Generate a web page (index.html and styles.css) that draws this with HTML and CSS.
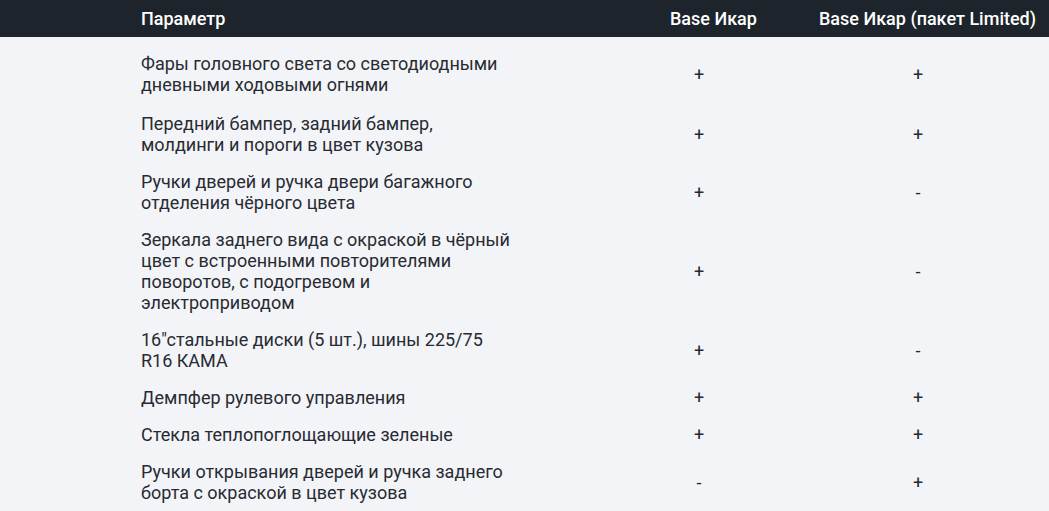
FILE: index.html
```html
<!DOCTYPE html>
<html lang="ru">
<head>
<meta charset="utf-8">
<title>Комплектация</title>
<link rel="stylesheet" href="styles.css">
</head>
<body>
<div class="table">
  <div class="row head">
    <div class="cell name">Параметр</div>
    <div class="cell val">Base Икар</div>
    <div class="cell val v3">Base Икар (пакет Limited)</div>
  </div>
  <div class="body">
    <div class="row first">
      <div class="cell name">Фары головного света со светодиодными<br>дневными ходовыми огнями</div>
      <div class="cell val">+</div>
      <div class="cell val v3">+</div>
    </div>
    <div class="row">
      <div class="cell name">Передний бампер, задний бампер,<br>молдинги и пороги в цвет кузова</div>
      <div class="cell val">+</div>
      <div class="cell val v3">+</div>
    </div>
    <div class="row">
      <div class="cell name">Ручки дверей и ручка двери багажного<br>отделения чёрного цвета</div>
      <div class="cell val">+</div>
      <div class="cell val v3">-</div>
    </div>
    <div class="row">
      <div class="cell name">Зеркала заднего вида с окраской в чёрный<br>цвет с встроенными повторителями<br>поворотов, с подогревом и<br>электроприводом</div>
      <div class="cell val">+</div>
      <div class="cell val v3">-</div>
    </div>
    <div class="row">
      <div class="cell name">16"стальные диски (5 шт.), шины 225/75<br>R16 КАМА</div>
      <div class="cell val">+</div>
      <div class="cell val v3">-</div>
    </div>
    <div class="row">
      <div class="cell name">Демпфер рулевого управления</div>
      <div class="cell val">+</div>
      <div class="cell val v3">+</div>
    </div>
    <div class="row">
      <div class="cell name">Стекла теплопоглощающие зеленые</div>
      <div class="cell val">+</div>
      <div class="cell val v3">+</div>
    </div>
    <div class="row">
      <div class="cell name">Ручки открывания дверей и ручка заднего<br>борта с окраской в цвет кузова</div>
      <div class="cell val">-</div>
      <div class="cell val v3">+</div>
    </div>
  </div>
</div>
</body>
</html>
```

FILE: styles.css
```css
* { box-sizing: border-box; }
html, body {
  margin: 0;
  padding: 0;
  background: #f3f4f8;
  overflow: hidden;
}
body {
  font-family: Roboto, "Noto Sans", "Liberation Sans", sans-serif;
  font-size: 18px;
  line-height: 21px;
  color: #272b31;
}
.table {
  width: 1049px;
}
.row {
  display: grid;
  grid-template-columns: 625px 148px 276px;
  align-items: center;
  padding: 8px 0;
}
.row .name {
  padding-left: 141px;
}
.head {
  background: #1e242c;
  color: #ffffff;
  font-weight: 500;
}
.head .val {
  padding-left: 45px;
  text-align: left;
  white-space: nowrap;
}
.head .v3 {
  padding-left: 46px;
}
.body {
  padding-top: 8px;
}
.row.first {
  padding-bottom: 10px;
}
.body .val {
  text-align: center;
}
.body .v3 {
  padding-left: 14px;
}
```
